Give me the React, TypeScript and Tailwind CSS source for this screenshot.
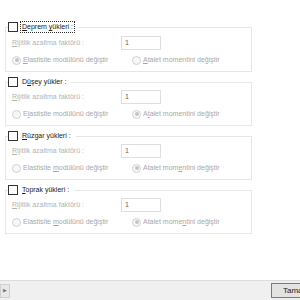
import React from "react";

type Load = {
  title: React.ReactNode;
  elastic: boolean;
  focused?: boolean;
  elasticLabel: React.ReactNode;
  inertiaLabel: React.ReactNode;
};

const u = (s: string) => <span className="underline">{s}</span>;

const LOADS: Load[] = [
  {
    title: <>{u("D")}eprem {u("y")}ükleri :</>,
    elastic: true,
    focused: true,
    elasticLabel: <>{u("E")}lastisite modülünü değiştir</>,
    inertiaLabel: <>{u("A")}talet momentini değiştir</>,
  },
  {
    title: <>D{u("ü")}şey yükler :</>,
    elastic: false,
    elasticLabel: <>E{u("l")}astisite modülünü değiştir</>,
    inertiaLabel: <>A{u("t")}alet momentini değiştir</>,
  },
  {
    title: <>{u("R")}üzgar yükleri :</>,
    elastic: false,
    elasticLabel: <>Elastisite {u("m")}odülünü değiştir</>,
    inertiaLabel: <>Atalet mom{u("e")}ntini değiştir</>,
  },
  {
    title: <>{u("T")}oprak yükleri :</>,
    elastic: false,
    elasticLabel: <>Elastisite {u("m")}odülünü değiştir</>,
    inertiaLabel: <>Atalet mome{u("n")}tini değiştir</>,
  },
];

function Radio({ checked }: { checked: boolean }) {
  return (
    <span className="flex h-[9px] w-[9px] shrink-0 items-center justify-center rounded-full border border-[#d2d2d2] bg-[#f7f7f7]">
      {checked && <span className="h-[4px] w-[4px] rounded-full bg-[#c4c4c4]" />}
    </span>
  );
}

function LoadGroup({ load }: { load: Load }) {
  return (
    <fieldset className="mb-[5px] w-[247px] border border-[#e6e6e6] px-[2px] pb-[3px] pt-[2px]">
      <legend className="flex items-center gap-[2px] pr-[3px]">
        <span className="h-[10px] w-[10px] border border-[#333333] bg-white" />
        <span
          className={
            load.focused
              ? "border border-dotted border-[#333] px-[1px] leading-[10px] text-[#222]"
              : "px-[2px] leading-[10px] text-[#222]"
          }
        >
          {load.title}
        </span>
      </legend>
      <div className="flex h-[16px] items-center pl-[4px]">
        <span className="w-[109px] whitespace-nowrap text-[#b4b4b4]">
          <span>{u("R")}ijitlik azaltma faktörü :</span>
        </span>
        <span className="flex h-[14px] w-[40px] items-center border border-[#dedede] px-[3px] text-[#666]">
          1
        </span>
      </div>
      <div className="mt-[1px] flex h-[16px] items-center whitespace-nowrap pl-[4px]">
        <span className="flex w-[120px] items-center gap-[2px] text-[#a8a8a8]">
          <Radio checked={load.elastic} />
          <span>{load.elasticLabel}</span>
        </span>
        <span className="flex items-center gap-[2px] text-[#a8a8a8]">
          <Radio checked={!load.elastic} />
          <span>{load.inertiaLabel}</span>
        </span>
      </div>
    </fieldset>
  );
}

export default function App() {
  return (
    <div className="flex h-[300px] w-[300px] flex-col overflow-hidden bg-white font-['Liberation_Sans',Arial,sans-serif] text-[7px]">
      <div className="flex-1 pl-[5px] pt-[21px]">
        {LOADS.map((load, i) => (
          <LoadGroup key={i} load={load} />
        ))}
      </div>
      <div className="flex h-[20px] items-center border-t border-[#dcdcdc] bg-[#f0f0f0]">
        <span className="flex h-[14px] w-[10px] items-center justify-center border border-[#cfcfcf] bg-[#e8e8e8] text-[5px] text-[#777]">
          ▶
        </span>
        <span className="ml-auto mr-[-25px] flex h-[15px] w-[54px] shrink-0 items-center whitespace-nowrap border border-[#3d87d6] bg-[#e3e3e3] pl-[11px] text-[8px] text-[#222]">
          Tamam
        </span>
      </div>
    </div>
  );
}
